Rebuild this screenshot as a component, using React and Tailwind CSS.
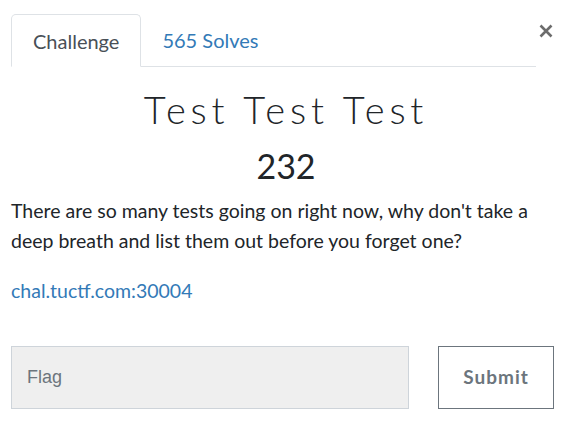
import React, { useState } from 'react';

const App = () => {
  const [flag, setFlag] = useState('');

  return (
    <div className="w-[572px] h-[429px] bg-white overflow-hidden font-['Lato',sans-serif] text-[#212529]">
      {/* Tabs + close */}
      <div className="flex items-start pl-[11px] pt-[14px]">
        <div className="flex w-[525px] border-b border-[#dee2e6]">
          <button className="-mb-px h-[53px] px-[21px] text-[20px] text-[#495057] bg-white border border-[#dee2e6] border-b-white rounded-t-[5px]">
            Challenge
          </button>
          <button className="h-[52px] px-[21px] text-[20px] text-[#337ab7]">
            565 Solves
          </button>
        </div>
        <button className="ml-[2px] mt-[9px] w-[16px] h-[16px] flex items-center justify-center text-[#6c6c6c]">
          <svg width="14" height="14" viewBox="0 0 14 14">
            <path d="M1.5 1.5 L12.5 12.5 M12.5 1.5 L1.5 12.5" stroke="currentColor" strokeWidth="2.6" />
          </svg>
        </button>
      </div>

      {/* Heading */}
      <div className="px-[11px] text-center">
        <h2 className="mt-[18px] text-[38px] leading-[48px] font-light tracking-[4.8px]">Test Test Test</h2>
        <h3 className="mt-[13px] text-[34px] leading-[40px] font-normal">232</h3>
      </div>

      {/* Description */}
      <div className="pl-[11px] pr-[36px] mt-[10px]">
        <p className="text-[19.5px] leading-[30px] text-[#212529]">
          There are so many tests going on right now, why don't take a deep breath and list them out before you forget one?
        </p>
        <p className="mt-[20px] text-[19.5px] leading-[30px]">
          <a href="#" className="text-[#337ab7]">chal.tuctf.com:30004</a>
        </p>
      </div>

      {/* Flag form */}
      <div className="flex items-center px-[11px] mt-[40px]">
        <input
          type="text"
          placeholder="Flag"
          value={flag}
          onChange={(e) => setFlag(e.target.value)}
          className="w-[398px] h-[63px] px-[15px] bg-[#efefef] border border-[#ced4da] text-[18px] font-['Liberation_Sans',sans-serif] text-[#495057] placeholder:text-[#6c757d] outline-none"
        />
        <button className="ml-[29px] w-[116px] h-[63px] border border-[#6c757d] text-[19px] font-bold text-[#6c757d] tracking-[1px]">
          Submit
        </button>
      </div>
    </div>
  );
};

export default App;
